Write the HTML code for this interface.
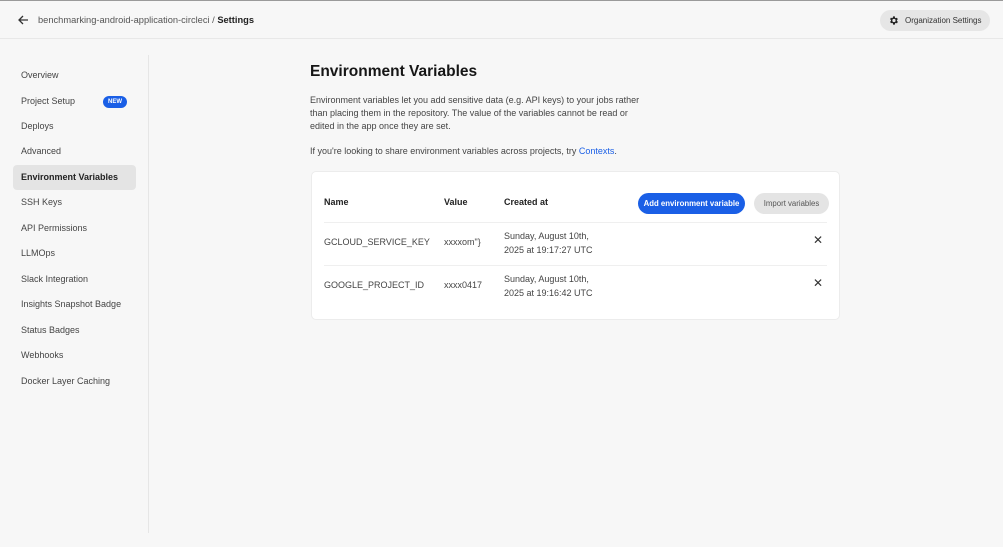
<!DOCTYPE html>
<html><head><style>
*{margin:0;padding:0;box-sizing:border-box}
body{width:1003px;height:547px;background:#f7f7f7;font-family:"Liberation Sans",sans-serif;color:#161616;position:relative;overflow:hidden}
.w{position:absolute;left:0;top:1px;width:1003px;height:546px}
.top{position:absolute;left:0;top:0;width:1003px;height:1px;background:#9a9a9a}
.hdr{position:absolute;left:0;top:0;width:1003px;height:38px;border-bottom:1px solid #e8e8e8}
.crumb{position:absolute;left:38px;top:14px;font-size:9.3px;color:#555}
.crumb b{color:#222;font-weight:600}
.org{position:absolute;left:880px;top:9px;width:110px;height:21px;border-radius:11px;background:#e6e6e6;font-size:8px;color:#333;line-height:21px;padding-left:25px}
.side{position:absolute;left:0;top:54px;width:149px;height:478px;border-right:1px solid #e6e6e6}
.it{position:absolute;left:13px;width:123px;height:25px;line-height:25px;padding-left:8px;font-size:9px;color:#444;border-radius:4px}
.it.a{background:#e4e4e4;color:#222;font-weight:600}
.new{position:absolute;left:90px;top:7px;background:#1a5fe6;color:#fff;font-size:6px;font-weight:700;border-radius:6px;width:24px;height:12px;line-height:12px;text-align:center;padding:0}
h1{position:absolute;left:310px;top:62px;font-size:15.5px;font-weight:600;color:#161616}
.p{position:absolute;left:310px;font-size:9px;line-height:13px;color:#444;width:340px}
.card{position:absolute;left:311px;top:170px;width:529px;height:149px;background:#fff;border:1px solid #ececec;border-radius:5px}
.c{position:absolute;font-size:9px;color:#444;line-height:13.5px}
.th{font-weight:600;color:#222}
.line{position:absolute;left:12px;right:12px;height:1px;background:#efefef}
.btn{position:absolute;top:21px;height:21px;border-radius:11px;font-size:7.8px;line-height:21px;text-align:center}
.x{position:absolute;font-size:12px;color:#333}
</style></head><body>
<div class="w">
<div class="hdr">
<svg style="position:absolute;left:18px;top:14px" width="11" height="10" viewBox="0 0 11 10"><path d="M10 5H1.5M5 1L1 5l4 4" stroke="#333" stroke-width="1.3" fill="none"/></svg>
<div class="crumb">benchmarking-android-application-circleci / <b>Settings</b></div>
<div class="org"><svg style="position:absolute;left:8px;top:5px" width="11" height="11" viewBox="0 0 24 24"><path fill="#222" d="M19.4 13a7.5 7.5 0 0 0 0-2l2.1-1.6-2-3.5-2.5 1a7.6 7.6 0 0 0-1.7-1L15 3h-4l-.4 2.8a7.6 7.6 0 0 0-1.7 1l-2.5-1-2 3.5L6.6 11a7.5 7.5 0 0 0 0 2l-2.1 1.6 2 3.5 2.5-1a7.6 7.6 0 0 0 1.7 1L11 21h4l.4-2.8a7.6 7.6 0 0 0 1.7-1l2.5 1 2-3.5zM13 15.5a3.5 3.5 0 1 1 0-7 3.5 3.5 0 0 1 0 7z"/></svg>Organization Settings</div>
</div>
<div class="side"></div>
<div class="it" style="top:62px">Overview</div>
<div class="it" style="top:88px">Project Setup<span class="new">NEW</span></div>
<div class="it" style="top:113px">Deploys</div>
<div class="it" style="top:138px">Advanced</div>
<div class="it a" style="top:164px">Environment Variables</div>
<div class="it" style="top:189px">SSH Keys</div>
<div class="it" style="top:215px">API Permissions</div>
<div class="it" style="top:240px">LLMOps</div>
<div class="it" style="top:266px">Slack Integration</div>
<div class="it" style="top:291px">Insights Snapshot Badge</div>
<div class="it" style="top:317px">Status Badges</div>
<div class="it" style="top:342px">Webhooks</div>
<div class="it" style="top:368px">Docker Layer Caching</div>
<h1>Environment Variables</h1>
<div class="p" style="top:93px">Environment variables let you add sensitive data (e.g. API keys) to your jobs rather than placing them in the repository. The value of the variables cannot be read or edited in the app once they are set.</div>
<div class="p" style="top:144px">If you're looking to share environment variables across projects, try <span style="color:#1a5fe6">Contexts</span>.</div>
<div class="card">
<div class="c th" style="left:12px;top:24px">Name</div>
<div class="c th" style="left:132px;top:24px">Value</div>
<div class="c th" style="left:192px;top:24px">Created at</div>
<div class="btn" style="left:326px;width:107px;background:#1a5fe6;color:#fff;font-weight:600">Add environment variable</div>
<div class="btn" style="left:442px;width:75px;background:#e4e4e4;color:#555">Import variables</div>
<div class="line" style="top:50px"></div>
<div class="c" style="left:12px;top:64px">GCLOUD_SERVICE_KEY</div>
<div class="c" style="left:132px;top:64px">xxxxom"}</div>
<div class="c" style="left:192px;top:58px">Sunday, August 10th,<br>2025 at 19:17:27 UTC</div>
<div class="x" style="left:501px;top:61px">✕</div>
<div class="line" style="top:93px"></div>
<div class="c" style="left:12px;top:107px">GOOGLE_PROJECT_ID</div>
<div class="c" style="left:132px;top:107px">xxxx0417</div>
<div class="c" style="left:192px;top:101px">Sunday, August 10th,<br>2025 at 19:16:42 UTC</div>
<div class="x" style="left:501px;top:104px">✕</div>
</div>
</div>
<div class="top"></div>
</body></html>
